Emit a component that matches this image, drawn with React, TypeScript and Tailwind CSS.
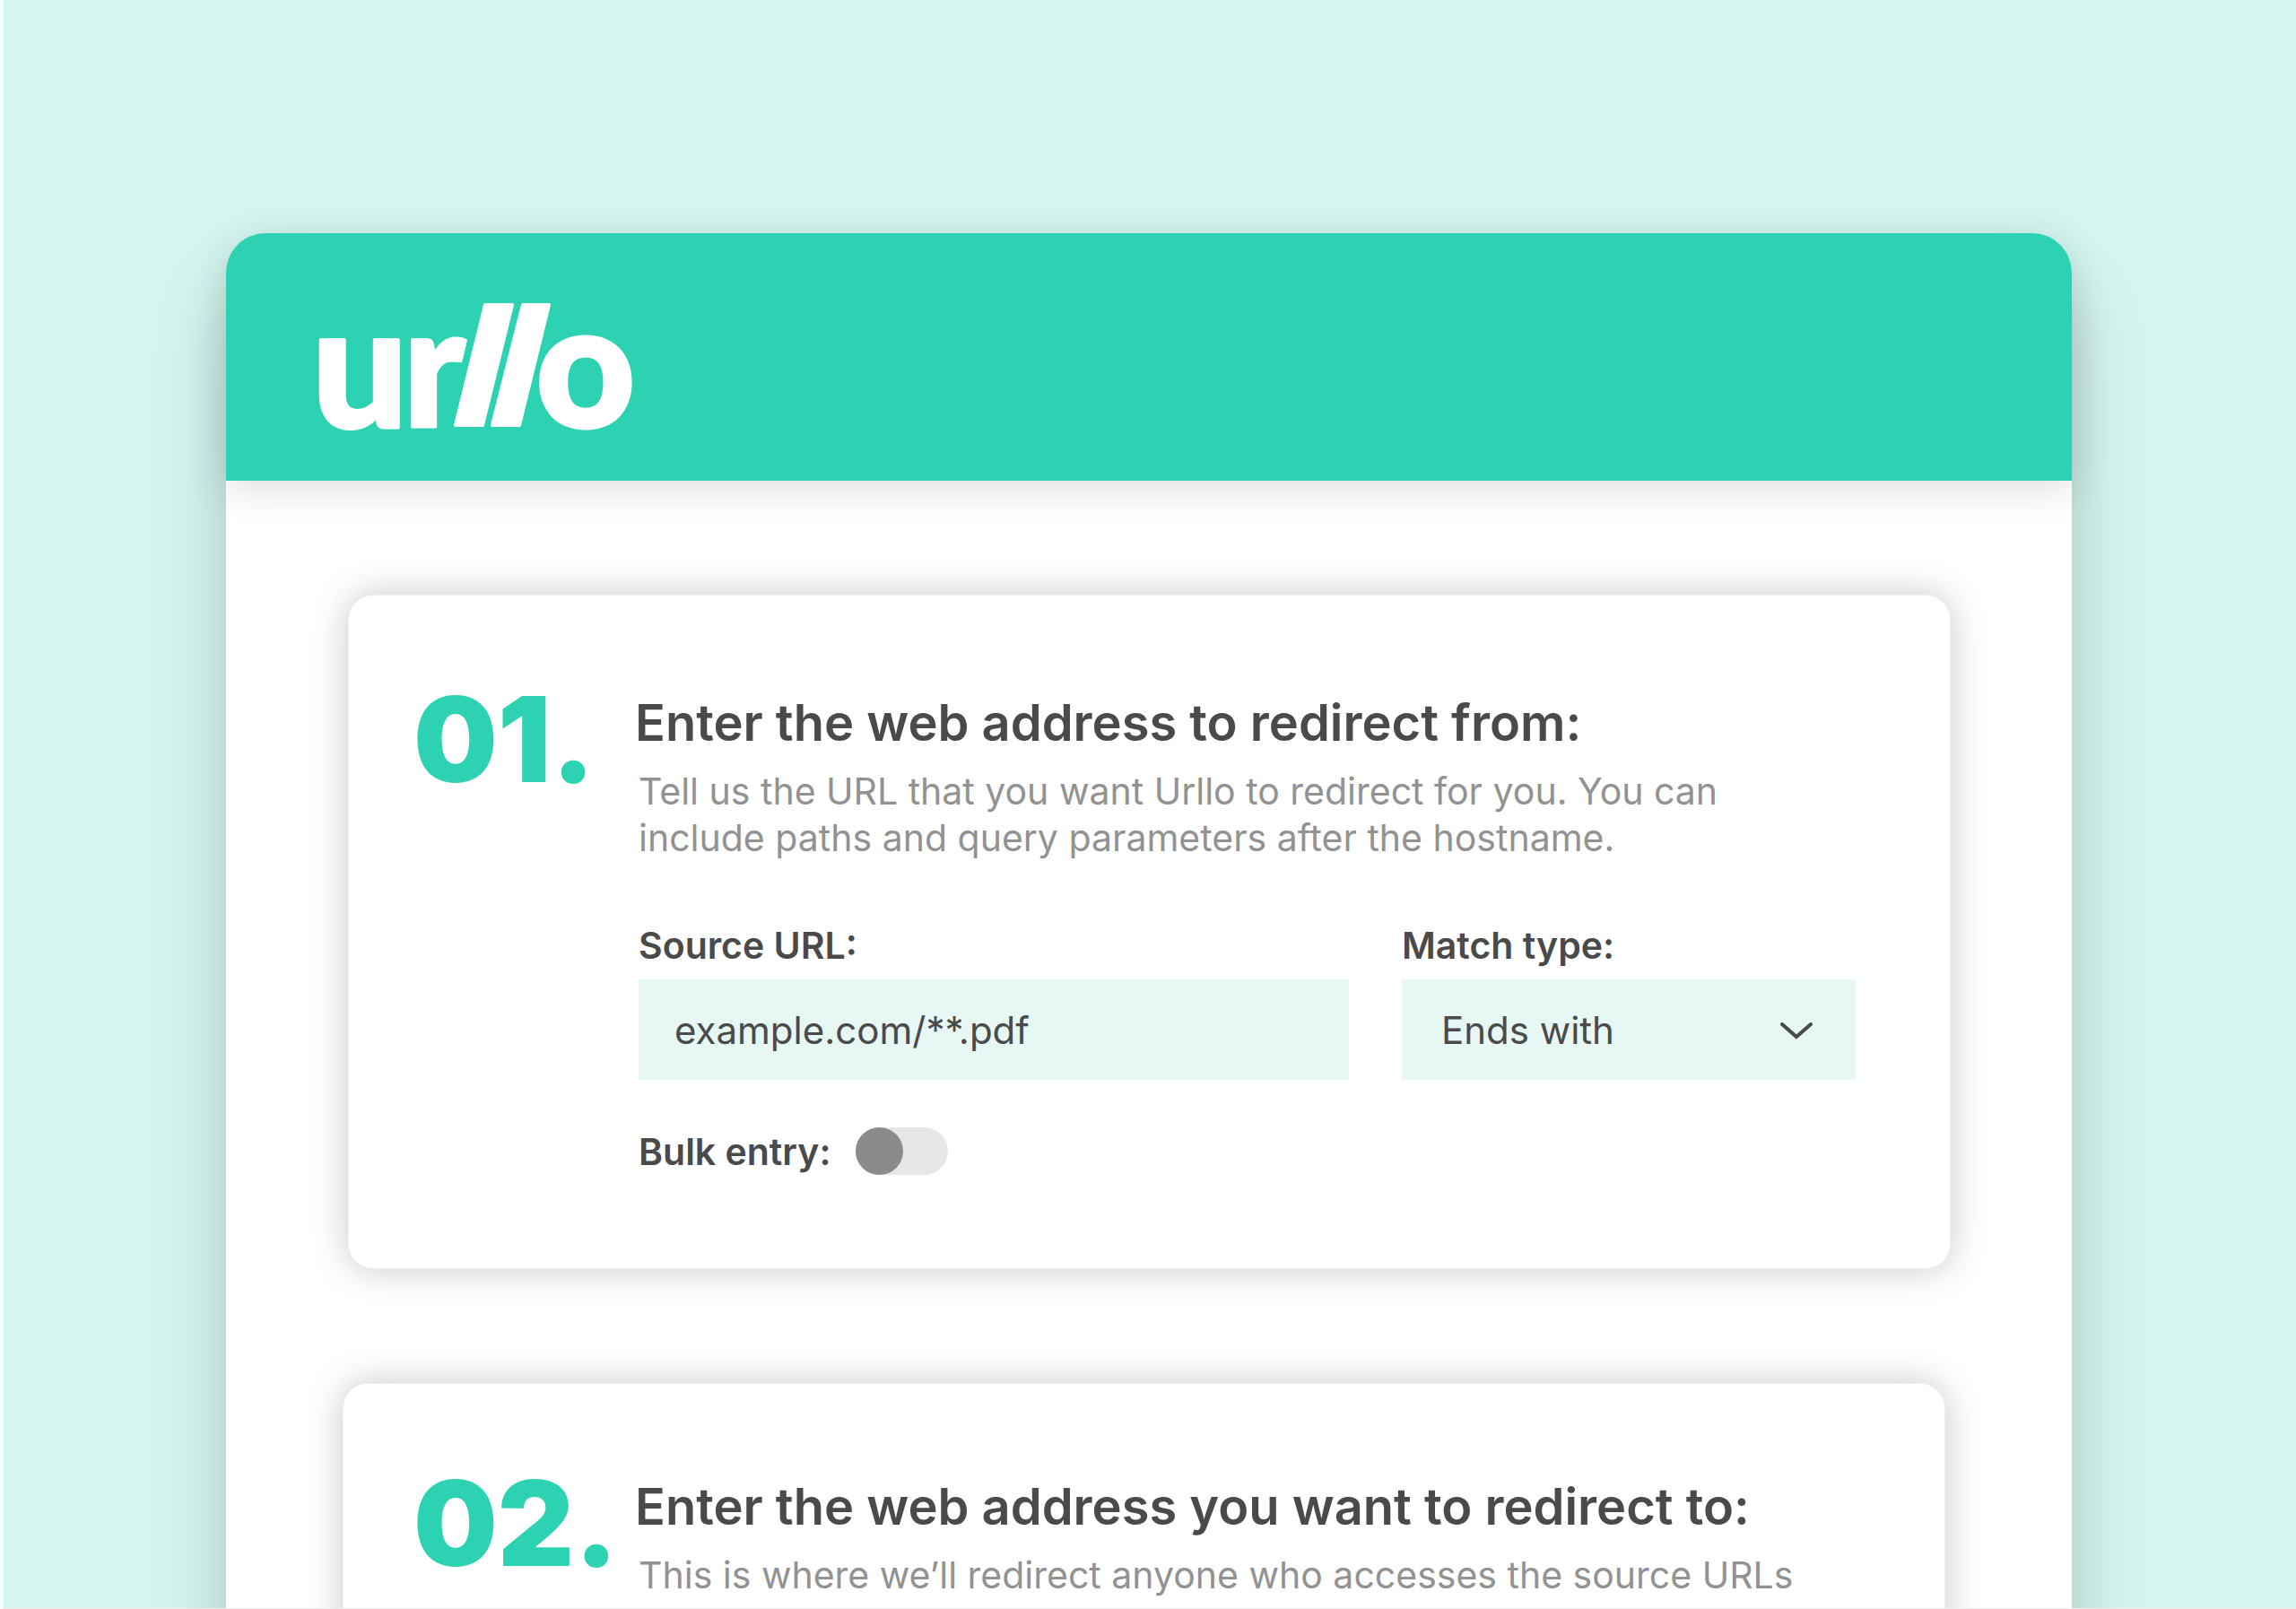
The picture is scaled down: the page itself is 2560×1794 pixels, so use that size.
import { useState } from "react";
import type { ReactNode } from "react";

/* ── Logo ── */
const UrlloLogo = () => (
  <svg width="356" height="144" viewBox="0 0 356 144" role="img" aria-label="urllo" className="overflow-visible">
    <g fill="#fff" stroke="#fff" strokeLinejoin="round" className="font-['Lato',sans-serif] font-black">
      <text x="-7" y="138" fontSize="188" strokeWidth="4">
        u
      </text>
      <text x="94" y="138" fontSize="188" strokeWidth="3">
        r
      </text>
      <text x="243" y="138" fontSize="190" strokeWidth="5">
        o
      </text>
    </g>
    {/* double slash */}
    <path d="M183 0H219L186 139H150Z" fill="#2dd2b3" stroke="#2dd2b3" strokeWidth="14" />
    <g fill="#fff" stroke="#fff" strokeWidth="4" strokeLinejoin="round">
      <path d="M186 2H216L183 136H153Z" />
      <path d="M228 2H257L224 136H194Z" />
    </g>
  </svg>
);

/* ── Step card ── */
const StepCard = ({
  number,
  title,
  description,
  className,
  children,
}: {
  number: string;
  title: string;
  description: string;
  className: string;
  children?: ReactNode;
}) => (
  <section
    className={`flex rounded-[28px] border border-[#f0f0f0] bg-white pb-[104px] shadow-[0_0_40px_rgba(0,0,0,0.22)] ${className}`}
  >
    <div className="w-[247px] shrink-0 text-[132px] leading-none font-black text-[#2dd2b3]">{number}</div>
    <div className="min-w-0 flex-1 pt-4">
      <h2 className="text-[56px] leading-[64px] font-semibold">{title}</h2>
      <div className="pl-1">
        <p className="mt-[18px] max-w-[1310px] text-[41px] leading-[52px] text-[#929292]">{description}</p>
        {children}
      </div>
    </div>
  </section>
);

export default function App() {
  const [source, setSource] = useState("example.com/**.pdf");
  const [match, setMatch] = useState("Ends with");
  const [bulk, setBulk] = useState(false);

  return (
    <div className="h-screen overflow-hidden border-b border-l-4 border-b-[#ececec] border-l-[#f7fffd] bg-[#d5f6ef] pt-[260px] pr-[250px] pl-[248px] font-['Inter','Liberation_Sans',sans-serif] text-[#4a4a4a]">
      <main className="rounded-t-[44px] bg-white pb-32 shadow-[0_60px_85px_rgba(0,0,0,0.2)]">
        <header className="rounded-t-[44px] bg-[#2dd2b3] px-[103px] pt-[78px] pb-[54px] shadow-[0_8px_44px_rgba(0,0,0,0.14)]">
          <UrlloLogo />
        </header>

        {/* ── Step 1: source ── */}
        <StepCard
          number="01."
          title="Enter the web address to redirect from:"
          description="Tell us the URL that you want Urllo to redirect for you. You can include paths and query parameters after the hostname."
          className="mt-[127px] mr-[135px] ml-[136px] pt-[94px] pr-[105px] pl-[72px]"
        >
          <div className="mt-[70px] flex gap-[59px]">
            <div className="flex-1">
              <label htmlFor="source" className="block text-[41px] leading-[48px] font-semibold">
                Source URL:
              </label>
              <input
                id="source"
                type="text"
                value={source}
                onChange={(e) => setSource(e.target.value)}
                className="mt-[14px] h-[112px] w-full bg-[#e6f7f4] px-10 text-[42px] outline-none"
              />
            </div>
            <div className="w-[506px]">
              <label htmlFor="match" className="block text-[41px] leading-[48px] font-semibold">
                Match type:
              </label>
              <div className="relative mt-[14px]">
                <select
                  id="match"
                  value={match}
                  onChange={(e) => setMatch(e.target.value)}
                  className="h-[112px] w-full appearance-none bg-[#e6f7f4] px-11 text-[42px] outline-none"
                >
                  <option>Ends with</option>
                  <option>Starts with</option>
                  <option>Exact match</option>
                </select>
                <svg
                  viewBox="0 0 36 20"
                  fill="none"
                  stroke="currentColor"
                  strokeWidth="4"
                  strokeLinecap="round"
                  className="pointer-events-none absolute top-12 right-12 h-5 w-9"
                >
                  <path d="M2 2l16 14L34 2" />
                </svg>
              </div>
            </div>
          </div>

          <div className="mt-[53px] flex items-center gap-7">
            <label htmlFor="bulk" className="text-[41px] leading-[48px] font-semibold">
              Bulk entry:
            </label>
            <input
              id="bulk"
              type="checkbox"
              role="switch"
              checked={bulk}
              onChange={(e) => setBulk(e.target.checked)}
              className="h-[53px] w-[103px] cursor-pointer appearance-none rounded-full bg-[#e7e7e7] transition-colors before:block before:size-[53px] before:rounded-full before:bg-[#8b8b8b] before:transition-transform checked:bg-[#2dd2b3] checked:before:translate-x-[50px]"
            />
          </div>
        </StepCard>

        {/* ── Step 2: destination ── */}
        <StepCard
          number="02."
          title="Enter the web address you want to redirect to:"
          description="This is where we’ll redirect anyone who accesses the source URLs"
          className="mt-[127px] mr-[141px] ml-[130px] pt-[89px] pr-[105px] pl-[78px]"
        />
      </main>
    </div>
  );
}
